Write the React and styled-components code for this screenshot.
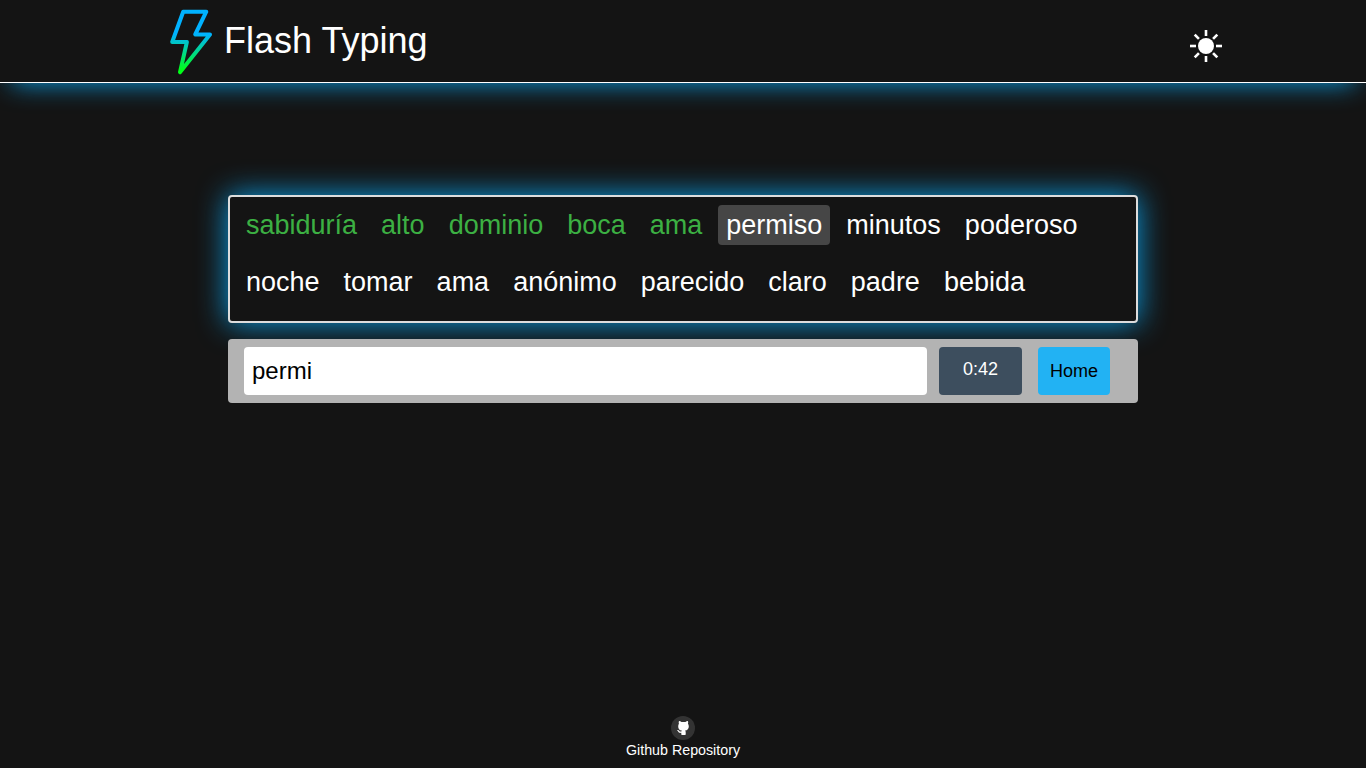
import React from "react";
import styled, { createGlobalStyle } from "styled-components";

const GlobalStyle = createGlobalStyle`
  *, *::before, *::after { box-sizing: border-box; }
  body {
    margin: 0;
    background: #141414;
    color: #fff;
    font-family: "Liberation Sans", Arial, Helvetica, sans-serif;
  }
`;

const Page = styled.div`
  display: flex;
  flex-direction: column;
  height: 768px;
  overflow: hidden;
`;

const Header = styled.header`
  display: flex;
  justify-content: space-between;
  align-items: flex-start;
  height: 83px;
  padding: 0 144px 0 164px;
  border-bottom: 1px solid #fff;
  box-shadow: 0 12px 26px -12px #0a9fe6;
`;

const Brand = styled.div`
  display: flex;
  align-items: center;
  height: 82px;
`;

const BoltIcon = styled.svg`
  width: 52px;
  height: 76px;
  margin-top: 2px;
`;

const Title = styled.h1`
  margin: 0 0 0 8px;
  font-size: 36px;
  font-weight: 400;
  line-height: 42px;
`;

const ThemeButton = styled.button`
  display: flex;
  margin: 30px 0 0;
  padding: 0;
  border: 0;
  background: none;
  color: #fff;
`;

const SunIcon = styled.svg`
  width: 32px;
  height: 32px;
`;

const Main = styled.main`
  flex: 1;
  width: 910px;
  margin: 112px auto 0;
`;

const WordsBox = styled.section`
  display: flex;
  flex-wrap: wrap;
  align-content: flex-start;
  gap: 17px 8px;
  height: 128px;
  padding: 8px;
  border: 2px solid #ddd;
  border-radius: 4px;
  background: #141414;
  box-shadow: 0 0 30px #0a9fe6;
`;

const wordColors = { done: "#3cb043", current: "#fff", pending: "#fff" };

const Word = styled.span`
  height: 40px;
  padding: 0 8px;
  border-radius: 4px;
  font-size: 27px;
  line-height: 40px;
  color: ${({ $state }) => wordColors[$state]};
  background: ${({ $state }) => ($state === "current" ? "#464646" : "transparent")};
`;

const Controls = styled.section`
  position: relative;
  display: flex;
  height: 64px;
  margin-top: 16px;
  padding: 8px 28px 8px 16px;
  border-radius: 4px;
  background: #b3b3b3;
`;

const TypingInput = styled.input`
  width: 683px;
  height: 48px;
  padding: 0 8px;
  border: 0;
  border-radius: 4px;
  outline: 0;
  background: #fff;
  color: #000;
  font: 24px "Liberation Sans", Arial, sans-serif;
`;

const Timer = styled.div`
  width: 83px;
  height: 48px;
  margin-left: 12px;
  border-radius: 4px;
  background: #3d4e5e;
  font-size: 18px;
  line-height: 44px;
  text-align: center;
`;

const HomeButton = styled.button`
  width: 72px;
  height: 48px;
  margin-left: 16px;
  padding: 0;
  border: 0;
  border-radius: 4px;
  background: #22b2f3;
  color: #000;
  font: 18px "Liberation Sans", Arial, sans-serif;
`;

const Footer = styled.footer`
  display: flex;
  flex-direction: column;
  align-items: center;
  height: 53px;
  font-size: 14.25px;
  line-height: 17px;
`;

const GithubBadge = styled.span`
  display: flex;
  align-items: center;
  justify-content: center;
  width: 24px;
  height: 24px;
  margin: 1px 0 2px;
  border-radius: 50%;
  background: #333;
`;

const GithubIcon = styled.svg`
  width: 24px;
  height: 24px;
`;

const words = [
  ["sabiduría", "done"], ["alto", "done"], ["dominio", "done"], ["boca", "done"],
  ["ama", "done"], ["permiso", "current"], ["minutos", "pending"], ["poderoso", "pending"],
  ["noche", "pending"], ["tomar", "pending"], ["ama", "pending"], ["anónimo", "pending"],
  ["parecido", "pending"], ["claro", "pending"], ["padre", "pending"], ["bebida", "pending"],
];

const rays = [0, 45, 90, 135, 180, 225, 270, 315];

export default function App() {
  return (
    <Page>
      <GlobalStyle />
      <Header>
        <Brand>
          <BoltIcon viewBox="0 0 52 76" fill="none">
            <defs>
              <linearGradient id="bolt" gradientUnits="userSpaceOnUse" x1="26" y1="30" x2="26" y2="66">
                <stop offset="0" stopColor="#00b2ff" />
                <stop offset="1" stopColor="#00ff19" />
              </linearGradient>
            </defs>
            <path d="M19.2 7.700H42.300L31.200 30.500H46L16 68.200L22.900 38H8.200Z" stroke="url(#bolt)" strokeWidth="4" strokeLinejoin="round" />
          </BoltIcon>
          <Title>Flash Typing</Title>
        </Brand>
        <ThemeButton aria-label="Cambiar tema">
          <SunIcon viewBox="0 0 32 32">
            <circle cx="16" cy="16" r="8" fill="currentColor" />
            {rays.map((a) => (
              <path key={a} d="M16 0V6" stroke="currentColor" strokeWidth="2.6" transform={`rotate(${a} 16 16)`} />
            ))}
          </SunIcon>
        </ThemeButton>
      </Header>
      <Main>
        <WordsBox>
          {words.map(([text, state], i) => (
            <Word key={i} $state={state}>{text}</Word>
          ))}
        </WordsBox>
        <Controls>
          <TypingInput defaultValue="permi" />
          <Timer>0:42</Timer>
          <HomeButton>Home</HomeButton>
        </Controls>
      </Main>
      <Footer>
        <GithubBadge>
          <GithubIcon viewBox="0 0 24 24">
            <path fill="#fff" d="M10.300 18.700V16.800C8.600 17.200 7.600 16.700 7.100 15.600C6.800 14.800 6.400 14.600 6 14.200C6.800 13.700 7.700 14 8.200 14.800C8.800 15.700 9.500 15.800 10.400 15.400L10.800 14.500C8.300 14.200 7.200 12.700 7.200 10.400C7.200 9.300 7.400 8.500 7.900 7.800C7.600 6.800 7.600 5.800 8 5C8.900 5 9.800 5.500 10.500 6.100C11.800 5.800 13.100 5.800 14.400 6.100C15.100 5.500 16 5 16.900 5C17.300 5.800 17.300 6.800 17 7.800C17.500 8.500 17.800 9.300 17.800 10.400C17.800 12.700 16.500 14.200 14.100 14.500C14.500 14.900 14.700 15.500 14.700 16.200V18.700C13.300 19.200 11.700 19.200 10.300 18.700Z" />
          </GithubIcon>
        </GithubBadge>
        Github Repository
      </Footer>
    </Page>
  );
}
